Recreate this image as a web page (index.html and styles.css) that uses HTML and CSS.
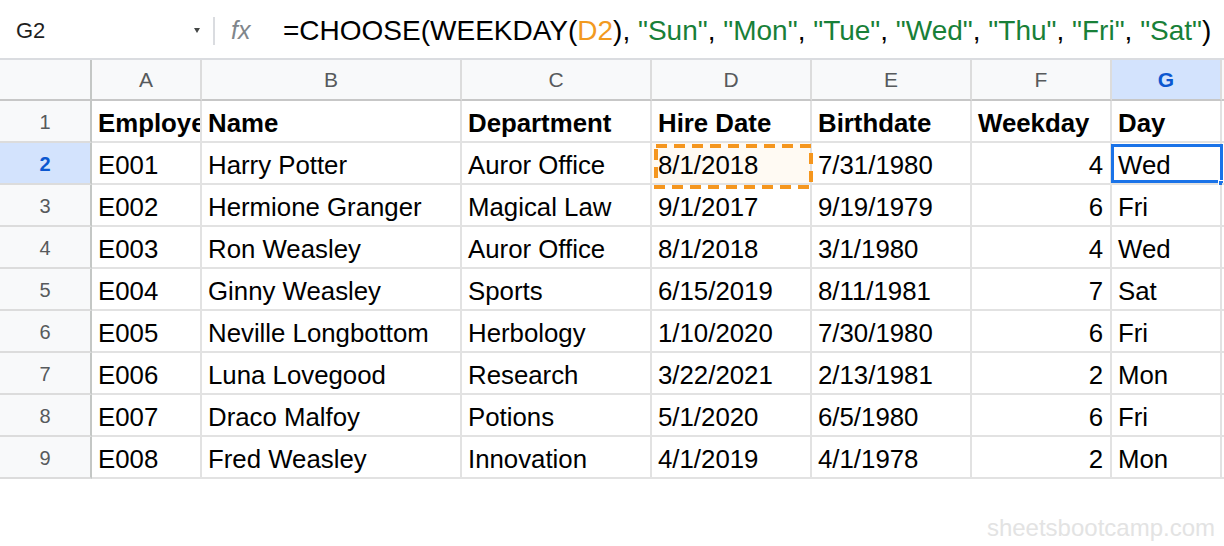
FILE: index.html
```html
<!DOCTYPE html>
<html>
<head>
<meta charset="utf-8">
<link rel="stylesheet" href="styles.css">
</head>
<body>
<div class="app">
  <div class="fbar">
    <div class="namebox"><span class="ref">G2</span><span class="caret"></span></div>
    <div class="sep"></div>
    <div class="fx">fx</div>
    <div class="formula">=CHOOSE(WEEKDAY(<span class="o">D2</span>), <span class="g">"Sun"</span>, <span class="g">"Mon"</span>, <span class="g">"Tue"</span>, <span class="g">"Wed"</span>, <span class="g">"Thu"</span>, <span class="g">"Fri"</span>, <span class="g">"Sat"</span>)</div>
  </div>
  <div class="grid">
    <div class="ch corner"></div>
    <div class="ch">A</div><div class="ch">B</div><div class="ch">C</div><div class="ch">D</div><div class="ch">E</div><div class="ch">F</div><div class="ch sel">G</div><div class="ch fill"></div>

    <div class="rh">1</div>
    <div class="c b">Employee ID</div><div class="c b">Name</div><div class="c b">Department</div><div class="c b">Hire Date</div><div class="c b">Birthdate</div><div class="c b">Weekday</div><div class="c b">Day</div><div class="c fill"></div>

    <div class="rh sel">2</div>
    <div class="c">E001</div><div class="c">Harry Potter</div><div class="c">Auror Office</div><div class="c ref-cell">8/1/2018<svg class="dash" viewBox="0 0 164 48"><rect x="4" y="3" width="155" height="41" fill="none" stroke="#f5961e" stroke-width="4" stroke-dasharray="11 7"/></svg></div><div class="c">7/31/1980</div><div class="c n">4</div><div class="c active">Wed<span class="handle"></span></div><div class="c fill"></div>

    <div class="rh">3</div>
    <div class="c">E002</div><div class="c">Hermione Granger</div><div class="c">Magical Law</div><div class="c">9/1/2017</div><div class="c">9/19/1979</div><div class="c n">6</div><div class="c">Fri</div><div class="c fill"></div>

    <div class="rh">4</div>
    <div class="c">E003</div><div class="c">Ron Weasley</div><div class="c">Auror Office</div><div class="c">8/1/2018</div><div class="c">3/1/1980</div><div class="c n">4</div><div class="c">Wed</div><div class="c fill"></div>

    <div class="rh">5</div>
    <div class="c">E004</div><div class="c">Ginny Weasley</div><div class="c">Sports</div><div class="c">6/15/2019</div><div class="c">8/11/1981</div><div class="c n">7</div><div class="c">Sat</div><div class="c fill"></div>

    <div class="rh">6</div>
    <div class="c">E005</div><div class="c">Neville Longbottom</div><div class="c">Herbology</div><div class="c">1/10/2020</div><div class="c">7/30/1980</div><div class="c n">6</div><div class="c">Fri</div><div class="c fill"></div>

    <div class="rh">7</div>
    <div class="c">E006</div><div class="c">Luna Lovegood</div><div class="c">Research</div><div class="c">3/22/2021</div><div class="c">2/13/1981</div><div class="c n">2</div><div class="c">Mon</div><div class="c fill"></div>

    <div class="rh">8</div>
    <div class="c">E007</div><div class="c">Draco Malfoy</div><div class="c">Potions</div><div class="c">5/1/2020</div><div class="c">6/5/1980</div><div class="c n">6</div><div class="c">Fri</div><div class="c fill"></div>

    <div class="rh">9</div>
    <div class="c">E008</div><div class="c">Fred Weasley</div><div class="c">Innovation</div><div class="c">4/1/2019</div><div class="c">4/1/1978</div><div class="c n">2</div><div class="c">Mon</div><div class="c fill"></div>
  </div>
  <div class="mark">sheetsbootcamp.com</div>
</div>
</body>
</html>
```

FILE: styles.css
```css
* { box-sizing: border-box; }
html, body { margin: 0; padding: 0; background: #fff; }
body { font-family: "Liberation Sans", Arial, sans-serif; width: 1224px; height: 546px; overflow: hidden; }

.fbar {
  height: 60px;
  padding-top: 3px;
  display: flex;
  align-items: center;
  border-bottom: 2px solid #dadce0;
}
.namebox {
  width: 213px;
  display: flex;
  align-items: center;
  justify-content: space-between;
  padding: 0 13px 0 16px;
}
.ref { font-size: 22px; color: #1f1f1f; }
.caret {
  width: 0; height: 0;
  border-left: 3px solid transparent;
  border-right: 3px solid transparent;
  border-top: 5px solid #444746;
}
.sep { width: 2px; height: 28px; background: #dadce0; }
.fx {
  width: 68px;
  padding-left: 16px;
  font-size: 25px;
  font-style: italic;
  color: #80868b;
}
.formula { font-size: 28px; color: #000; white-space: nowrap; }
.formula .o { color: #f29a1f; }
.formula .g { color: #188038; }

.grid {
  display: grid;
  grid-template-columns: 92px 110px 260px 190px 160px 160px 140px 110px 2px;
  grid-template-rows: 41px repeat(9, 42px);
}
.ch, .rh {
  background: #f8f9fa;
  color: #575a5c;
  font-size: 21px;
  display: flex;
  align-items: center;
  justify-content: center;
  border-right: 2px solid #dcdcdc;
  border-bottom: 2px solid #c7c7c7;
}
.ch.corner, .rh { border-right-color: #c4c7c5; }
.rh { border-bottom-color: #dcdcdc; font-size: 20px; padding-top: 2px; }
.ch.sel, .rh.sel { background: #d3e3fd; color: #0b57d0; font-weight: bold; }
.ch.fill { border-right: none; }

.c {
  position: relative;
  font-size: 25.8px;
  color: #000;
  white-space: nowrap;
  overflow: hidden;
  padding: 4px 7px 0 6px;
  display: flex;
  align-items: center;
  border-right: 2px solid #e2e2e2;
  border-bottom: 2px solid #e2e2e2;
}
.c.b { font-weight: bold; }
.c.n { justify-content: flex-end; }
.c.fill { padding: 0; border-right: none; }

.ref-cell { background: #fffaf3; overflow: visible; }
.dash { position: absolute; left: 0; top: 0; width: 164px; height: 48px; overflow: visible; }

.active { overflow: visible; }
.active::before {
  content: "";
  position: absolute;
  left: -1px; top: 1px; right: -3px; bottom: 0;
  border: 3px solid #1a73e8;
}
.handle {
  position: absolute;
  right: -4px; bottom: -3px;
  width: 6px; height: 6px;
  background: #1a73e8;
  border: 1px solid #fff;
}

.mark {
  text-align: right;
  padding: 35px 9px 0 0;
  font-size: 24px;
  color: #e3e3e3;
}
```
